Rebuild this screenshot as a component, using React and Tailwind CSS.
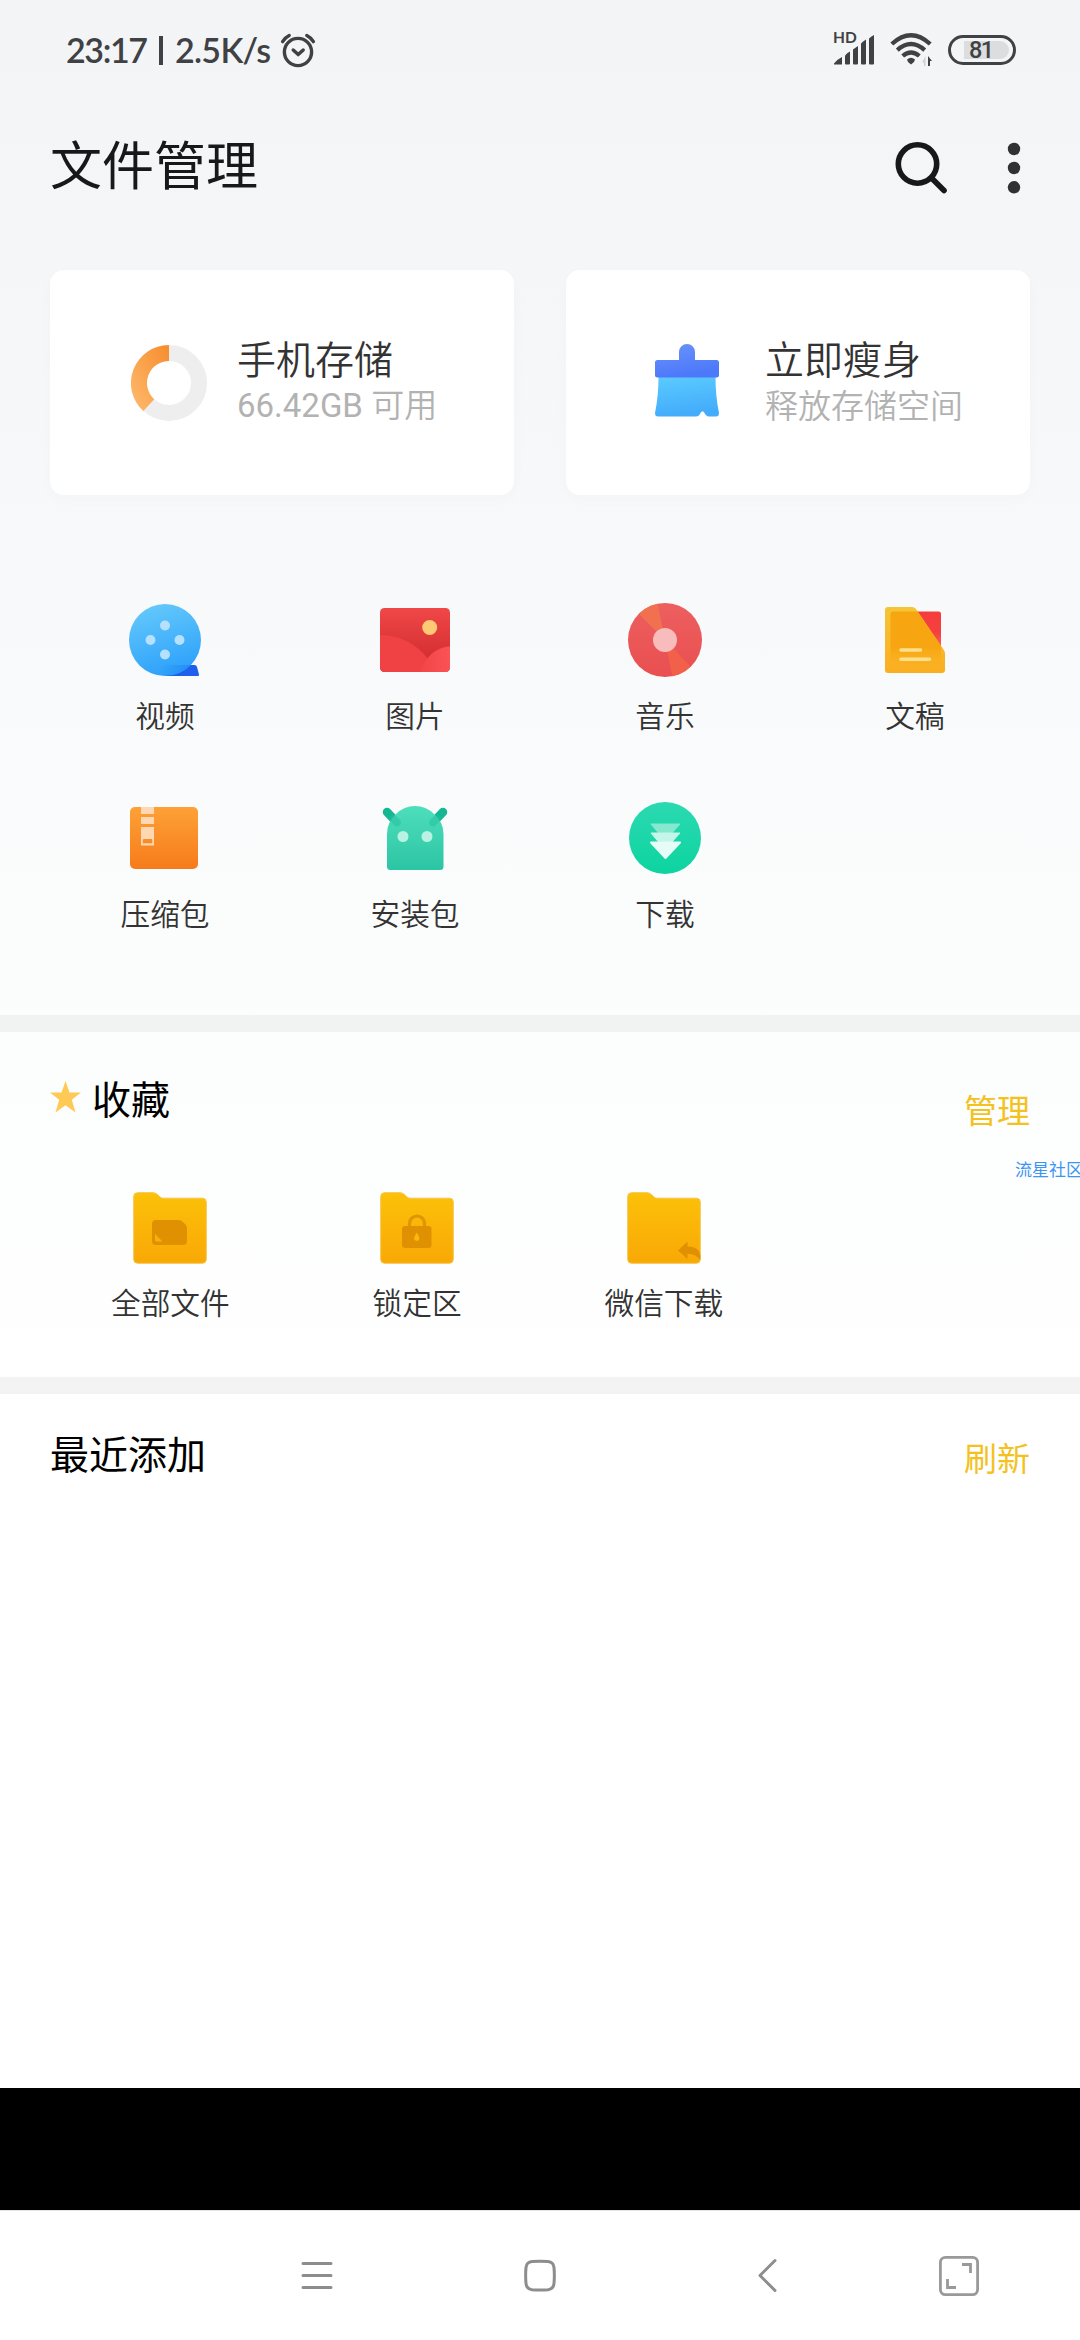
import React from "react";

const cjk = "font-['Noto_Sans_CJK_SC',sans-serif]";

function AlarmIcon() {
  return (
    <svg width="36" height="36" viewBox="0 0 36 36" fill="none" stroke="#404144" strokeWidth="3.4" strokeLinecap="round">
      <circle cx="18" cy="20" r="13.6" />
      <path d="M13.2 18l5 4.6 5-4.6" strokeLinejoin="round" />
      <path d="M2.6 9.6q2.6-4 6.6-6M33.4 9.6q-2.6-4-6.6-6" />
    </svg>
  );
}

function SignalIcon() {
  return (
    <svg width="41" height="30" viewBox="0 0 41 30" fill="#404144">
      <path d="M0 29.5V28.500Q3 24.500 8 22V29.500Z" />
      <path d="M11 28.500V20.500Q13.500 17.500 16 16.500V28.500q0 1-1 1h-3q-1 0-1-1Z" />
      <path d="M19 28.500V14.500Q21.500 12.500 24 11V28.500q0 1-1 1h-3q-1 0-1-1Z" />
      <path d="M27 28.500V8.500Q29.500 6 32 4.500V28.500q0 1-1 1h-3q-1 0-1-1Z" />
      <path d="M35 28.500V3.500Q37.500 1 40 0V28.500q0 1-1 1h-3q-1 0-1-1Z" />
    </svg>
  );
}

function WifiIcon() {
  return (
    <svg width="44" height="36" viewBox="0 0 44 36" fill="none" stroke="#404144" strokeWidth="4.300">
      <path d="M1.800 12Q21 -5.500 40.200 12" />
      <path d="M7.300 18.200Q21 6 34.700 18.200" />
      <path d="M12.700 24Q21 16.800 29.300 24" />
      <path d="M17 27.500q4-3.500 8 0l-1 2.500-3 2.500-3-2.500Z" fill="#404144" stroke="none" />
      <path d="M35.500 34V24l-3.500 6.500h2V34Z" fill="#d0d1d3" stroke="none" />
      <path d="M38 34V24l4 5h-2v5Z" fill="#404144" stroke="none" />
    </svg>
  );
}

function StorageRing() {
  return (
    <svg width="76" height="76" viewBox="0 0 76 76" fill="none" strokeWidth="16">
      <defs>
        <linearGradient id="ring" x1="0" y1="1" x2="1" y2="0">
          <stop offset="0" stopColor="#fdb465" />
          <stop offset="1" stopColor="#f78f31" />
        </linearGradient>
      </defs>
      <circle cx="38" cy="38" r="30" stroke="#eeeeee" />
      <path d="M38 8A30 30 0 0 0 17.800 60.200" stroke="url(#ring)" />
    </svg>
  );
}

function BrushIcon() {
  return (
    <svg width="64" height="74" viewBox="0 0 64 74">
      <defs>
        <linearGradient id="brushTop" x1="0" y1="0" x2="0.3" y2="1">
          <stop offset="0" stopColor="#6b93fa" />
          <stop offset="1" stopColor="#4c78fa" />
        </linearGradient>
        <linearGradient id="brushBody" x1="0" y1="0" x2="0.2" y2="1">
          <stop offset="0" stopColor="#5bcbff" />
          <stop offset="1" stopColor="#43acfb" />
        </linearGradient>
      </defs>
      <path d="M3.500 33H60.500Q60.500 52 63.900 68.500Q64.300 72.500 61 72.500H53Q50.500 72 49.500 69Q47.500 65.500 45.500 69Q44 72.500 41 72.500H3Q-.3 72.500 .1 68.500Q3.500 52 3.500 33Z" fill="url(#brushBody)" />
      <path d="M24 16V8a8 8 0 0 1 16 0V16H61.500a2.500 2.500 0 0 1 2.500 2.500V31a2.500 2.500 0 0 1-2.500 2.500H2.500A2.500 2.500 0 0 1 0 31V18.500A2.500 2.500 0 0 1 2.500 16Z" fill="url(#brushTop)" />
    </svg>
  );
}

/* Category icons share an 80x80 canvas centred on (40, 40). */
function VideoIcon() {
  return (
    <svg width="80" height="80" viewBox="0 0 80 80">
      <defs>
        <linearGradient id="video" x1="0.35" y1="0" x2="0.65" y2="1">
          <stop offset="0" stopColor="#63c8fb" />
          <stop offset="1" stopColor="#2b9ffa" />
        </linearGradient>
        <linearGradient id="tail" x1="0" y1="0" x2="1" y2="0">
          <stop offset="0" stopColor="#1c84f6" stopOpacity="0" />
          <stop offset="1" stopColor="#1c78f2" stopOpacity="0.6" />
        </linearGradient>
        <clipPath id="reel"><circle cx="40" cy="40" r="36" /></clipPath>
      </defs>
      <path d="M40 76L62 65H69.500Q71.500 65 72 67L74 74.500Q74.200 76 73 76Z" fill="#1f5fec" />
      <circle cx="40" cy="40" r="36" fill="url(#video)" />
      <path d="M36 65H68V76H36Z" fill="url(#tail)" clipPath="url(#reel)" />
      <g fill="#b5e0fe">
        <circle cx="40" cy="25.500" r="5" />
        <circle cx="25.500" cy="40" r="5" />
        <circle cx="54.500" cy="40" r="5" />
        <circle cx="40" cy="54.500" r="5" />
      </g>
    </svg>
  );
}

function PictureIcon() {
  return (
    <svg width="80" height="80" viewBox="0 0 80 80">
      <defs>
        <linearGradient id="sky" x1="0" y1="0" x2="0" y2="1">
          <stop offset="0" stopColor="#f04748" />
          <stop offset="0.75" stopColor="#d63032" />
        </linearGradient>
        <linearGradient id="hill" x1="0" y1="0" x2="1" y2="0">
          <stop offset="0" stopColor="#f24548" />
          <stop offset="0.5" stopColor="#fb5456" />
        </linearGradient>
        <clipPath id="frame"><rect x="5" y="8" width="70" height="64" rx="4.500" /></clipPath>
      </defs>
      <g clipPath="url(#frame)">
        <rect x="5" y="8" width="70" height="64" fill="url(#sky)" />
        <circle cx="5" cy="95" r="60" fill="#f04245" />
        <circle cx="78" cy="79" r="33" fill="url(#hill)" />
      </g>
      <circle cx="54.700" cy="27.500" r="7.500" fill="#fec975" />
    </svg>
  );
}

function MusicIcon() {
  return (
    <svg width="80" height="80" viewBox="0 0 80 80">
      <defs>
        <linearGradient id="disc" x1="0" y1="0" x2="0" y2="1">
          <stop offset="0" stopColor="#ed5f5f" />
          <stop offset="1" stopColor="#e94f50" />
        </linearGradient>
        <clipPath id="discClip"><circle cx="40" cy="40" r="37" /></clipPath>
      </defs>
      <circle cx="40" cy="40" r="37" fill="url(#disc)" />
      <g clipPath="url(#discClip)" fill="#f3604a">
        <path d="M40 40L10 10L32 0Z" fill="#f17050" />
        <path d="M40 40L48 80L69 70Z" />
      </g>
      <circle cx="40" cy="40" r="12" fill="#f8bcbd" />
    </svg>
  );
}

function DocIcon() {
  return (
    <svg width="80" height="80" viewBox="0 0 80 80">
      <defs>
        <linearGradient id="docBack" x1="0" y1="0" x2="0" y2="1">
          <stop offset="0" stopColor="#f5c536" />
          <stop offset="1" stopColor="#faae20" />
        </linearGradient>
        <linearGradient id="docPage" x1="0" y1="0" x2="0" y2="1">
          <stop offset="0" stopColor="#f43c3c" />
          <stop offset="0.5" stopColor="#f64040" />
          <stop offset="1" stopColor="#fb7070" />
        </linearGradient>
        <linearGradient id="docShade" x1="0" y1="0" x2="0" y2="1">
          <stop offset="0" stopColor="#f7a510" />
          <stop offset="0.6" stopColor="#f7a510" />
          <stop offset="1" stopColor="#faae20" stopOpacity="0" />
        </linearGradient>
      </defs>
      <path d="M30 11.500H63.500Q66 11.500 66 14V54H30Z" fill="url(#docPage)" />
      <path d="M13 7H37Q39.500 7 41 9L68.500 49.500Q70 51.500 70 54V70Q70 73 67 73H13Q10 73 10 70V10Q10 7 13 7Z" fill="url(#docBack)" />
      <path d="M18 11.500H42.500L66 46V70H15.500V14Q15.500 11.500 18 11.500Z" fill="url(#docShade)" />
      <path d="M26 50H45.500M26 59.200H54.500" stroke="#fee08c" strokeWidth="3.600" strokeLinecap="round" />
    </svg>
  );
}

function ZipIcon() {
  return (
    <svg width="80" height="80" viewBox="0 0 80 80">
      <defs>
        <linearGradient id="zip" x1="0" y1="0" x2="0" y2="1">
          <stop offset="0" stopColor="#fea136" />
          <stop offset="1" stopColor="#f67b1b" />
        </linearGradient>
      </defs>
      <rect x="5" y="9" width="68" height="62" rx="5" fill="url(#zip)" />
      <g fill="#fdd8b2">
        <rect x="16" y="9" width="13" height="7" />
        <rect x="16" y="19" width="13" height="7" />
        <path fillRule="evenodd" d="M16 29H29V47.500H16ZM18.800 41a1 1 0 0 0-1 1v3.200h9.500v-3.200a1 1 0 0 0-1-1Z" />
      </g>
    </svg>
  );
}

function AndroidIcon() {
  return (
    <svg width="80" height="80" viewBox="0 0 80 80">
      <defs>
        <linearGradient id="robot" x1="0" y1="0" x2="0" y2="1">
          <stop offset="0" stopColor="#4edebb" />
          <stop offset="1" stopColor="#2cc5a4" />
        </linearGradient>
      </defs>
      <path d="M12 14L22 24.500M68 14L58 24.500" stroke="#14b694" strokeWidth="8.500" strokeLinecap="round" />
      <path d="M12 36Q12 24 21 16Q29 8 40 8Q51 8 59 16Q68.500 24 68.500 36V68.500Q68.500 72 65 72H15.500Q12 72 12 68.500Z" fill="url(#robot)" />
      <path d="M18 20.500L22 24.500M62 20.500L58 24.500" stroke="#22c09d" strokeWidth="7.500" strokeLinecap="round" opacity=".5" />
      <circle cx="28" cy="38.500" r="5.500" fill="#b9f1e3" />
      <circle cx="52" cy="38.500" r="5.500" fill="#b9f1e3" />
    </svg>
  );
}

function DownloadIcon() {
  return (
    <svg width="80" height="80" viewBox="0 0 80 80">
      <defs>
        <linearGradient id="dl" x1="0" y1="0" x2="0" y2="1">
          <stop offset="0" stopColor="#2cd9b1" />
          <stop offset="1" stopColor="#0cd4a0" />
        </linearGradient>
      </defs>
      <circle cx="40" cy="40" r="36" fill="url(#dl)" />
      <path d="M26 26H55L47 35H33.500Z" fill="#86e8cf" stroke="#86e8cf" strokeLinejoin="round" />
      <path d="M26 35H55L47 44H33.500Z" fill="#c3f5e8" stroke="#c3f5e8" strokeLinejoin="round" />
      <path d="M26 44.500H55L40.500 60Z" fill="#e6fcf6" stroke="#e6fcf6" strokeWidth="2" strokeLinejoin="round" />
    </svg>
  );
}

function Folder({ id, children }) {
  return (
    <svg width="74" height="72" viewBox="0 0 74 72">
      <defs>
        <linearGradient id={id} x1="0" y1="0" x2="0" y2="1">
          <stop offset="0" stopColor="#fcc109" />
          <stop offset="1" stopColor="#f9a806" />
        </linearGradient>
      </defs>
      <path d="M4.500 .7H20Q22.500 .7 24.500 2.500L27 5Q28.300 6.200 30.500 6.200H69.500Q73.300 6.200 73.300 10V67.500Q73.300 71.300 69.500 71.300H4.500Q.7 71.300 .7 67.500V4.500Q.7 .7 4.500 .7Z" fill={`url(#${id})`} stroke="#f5c64a" strokeWidth="1" />
      {children}
    </svg>
  );
}

function AllFilesIcon() {
  return (
    <Folder id="f1">
      <path fillRule="evenodd" d="M23 28H45.500Q47.500 28 49 29.300L52.500 32.500Q54 34 54 36V49Q54 53 50 53H23Q19 53 19 49V32Q19 28 23 28ZM22 42V47.500Q22 49.500 24 49.500H29.500Z" fill="#df9102" />
    </Folder>
  );
}

function LockedIcon() {
  return (
    <Folder id="f2">
      <path d="M29.500 36V31.500a7.500 7.500 0 0 1 15 0V36" fill="none" stroke="#e09602" strokeWidth="3.200" />
      <rect x="22" y="34" width="29.500" height="22" rx="3" fill="#df9102" />
      <path d="M36.700 40.500Q42 48.500 36.700 49Q31.500 48.500 36.700 40.500Z" fill="#fbb808" />
    </Folder>
  );
}

function WechatFolderIcon() {
  return (
    <Folder id="f3">
      <path d="M51 58.500L60.500 49.500V54.500Q72.500 54.500 73.300 63V68Q68 61 60.500 62V67Z" fill="#df9102" />
    </Folder>
  );
}

const categories = [
  ["视频", VideoIcon],
  ["图片", PictureIcon],
  ["音乐", MusicIcon],
  ["文稿", DocIcon],
  ["压缩包", ZipIcon],
  ["安装包", AndroidIcon],
  ["下载", DownloadIcon],
];

const favorites = [
  ["全部文件", AllFilesIcon],
  ["锁定区", LockedIcon],
  ["微信下载", WechatFolderIcon],
];

export default function App() {
  return (
    <div className={"flex h-[2340px] w-[1080px] flex-col overflow-hidden bg-white " + cjk}>
      <div className="flex h-[2088px] flex-col bg-linear-to-b from-[#f3f4f6] via-[#fcfdfd] via-[1050px] to-white to-[1400px]">
        {/* Status bar */}
        <div className="flex h-[100px] items-center justify-between pr-16 pl-[66px] font-['Lato',sans-serif] text-[#404144]">
          <div className="flex items-center">
            <span className="w-[93px] text-[34px] leading-[40px] font-semibold tracking-[-1.4px]">23:17</span>
            <span className="h-[29px] w-1 bg-[#404144]" />
            <span className="ml-3 w-[104px] text-[34px] leading-[40px] font-semibold tracking-[-0.7px] whitespace-nowrap">2.5K/s</span>
            <span className="ml-px flex"><AlarmIcon /></span>
          </div>
          <div className="relative flex items-center">
            <span className="absolute -top-[3px] -left-px text-[15.500px] leading-[16px] font-bold">HD</span>
            <SignalIcon />
            <span className="ml-[15px] flex"><WifiIcon /></span>
            <span className="ml-[14px] flex h-[30px] w-[68px] items-center rounded-full border-[3px] border-[#404144] pl-[13px]">
              <span className="flex h-[18px] w-[45px] items-center rounded-r-[9px] bg-[#dcddde] pl-[5px] font-['Roboto',sans-serif] text-[23.500px] leading-[18px] font-medium tracking-[-1.500px]">81</span>
            </span>
          </div>
        </div>

        {/* Title bar */}
        <div className="flex h-[170px] justify-between pt-[31px] pr-[59px] pl-[50px]">
          <h1 className="text-[52px] leading-[64px] text-[#17181a]">文件管理</h1>
          <div className="flex gap-[60px] pt-[9px]">
            <svg width="54" height="56" viewBox="0 0 54 56" fill="none" stroke="#17181a" strokeLinecap="round">
              <circle cx="24.500" cy="24" r="19.200" strokeWidth="5.600" />
              <path d="M39.500 39L51 50.500" strokeWidth="5.600" />
            </svg>
            <svg width="14" height="56" viewBox="0 0 14 56" fill="#303133">
              <circle cx="7" cy="9" r="6.200" />
              <circle cx="7" cy="28" r="6.200" />
              <circle cx="7" cy="47.300" r="6.200" />
            </svg>
          </div>
        </div>

        {/* Storage cards */}
        <div className="grid grid-cols-2 gap-[52px] px-[50px]">
          <div className="flex h-[225px] items-center rounded-[14px] bg-white pl-[81px] shadow-[0_4px_14px_rgba(60,90,160,0.025)]">
            <StorageRing />
            <div className="ml-[30px] flex flex-col pb-1 font-[350]">
              <span className="text-[39px] leading-[48px] text-[#333333]">手机存储</span>
              <span className="mt-0.5 font-['Roboto','Noto_Sans_CJK_SC',sans-serif] text-[33px] leading-[46px] font-normal text-[#b2b2b2]">
                66.42GB <span className="font-[350]">可用</span>
              </span>
            </div>
          </div>
          <div className="flex h-[225px] items-center rounded-[14px] bg-white pl-[89px] shadow-[0_4px_14px_rgba(60,90,160,0.025)]">
            <span className="-mt-1 flex"><BrushIcon /></span>
            <div className="ml-[46px] flex flex-col pb-1 font-[350]">
              <span className="text-[39px] leading-[48px] text-[#333333]">立即瘦身</span>
              <span className="mb-0.5 text-[33px] leading-[46px] text-[#b2b2b2]">释放存储空间</span>
            </div>
          </div>
        </div>

        {/* Categories */}
        <div className="grid h-[520px] grid-cols-4 content-start gap-y-[62px] px-10 pt-[105px]">
          {categories.map(([label, Icon]) => (
            <div key={label} className="flex h-[136px] flex-col items-center">
              <Icon />
              <span className="mt-[15px] text-[29.700px] leading-[40px] font-[350] text-[#333333]">{label}</span>
            </div>
          ))}
        </div>

        <div className="h-[17px] bg-[#f1f3f2]" />

        {/* Favorites */}
        <div className="relative h-[345px]">
          <div className="flex h-[129px] justify-between px-[50px] pt-[40px]">
            <div className="flex h-[50px] items-center">
              <svg width="32" height="32" viewBox="0 0 32 32" fill="#fec955">
                <path d="M15.500 0L19.500 11.500H31L21.800 18.800L25.500 31.500L15.500 24.300L5.500 31.500L9.200 18.800L0 11.500H11.500Z" />
              </svg>
              <span className="ml-[10px] text-[39px] leading-[50px] text-black">收藏</span>
            </div>
            <span className="mt-[14px] text-[33px] leading-[46px] text-[#f3c21f]">管理</span>
          </div>
          <div className="ml-[47px] grid w-[987px] grid-cols-4 pt-[31px]">
            {favorites.map(([label, Icon]) => (
              <div key={label} className="flex flex-col items-center">
                <Icon />
                <span className="mt-[18px] text-[29.700px] leading-[40px] font-[350] text-[#333333]">{label}</span>
              </div>
            ))}
          </div>
          <span className="absolute top-[126px] left-[1015px] text-[17px] leading-[22px] whitespace-nowrap text-[#3c95f5]">流星社区</span>
        </div>

        <div className="h-[17px] bg-[#f3f3f3]" />

        {/* Recently added */}
        <div className="flex justify-between px-[50px] pt-[33px]">
          <span className="text-[39px] leading-[50px] text-black">最近添加</span>
          <span className="mt-[7px] text-[33px] leading-[46px] text-[#f3c21f]">刷新</span>
        </div>
      </div>

      <div className="h-[122px] bg-black" />

      {/* Navigation bar */}
      <div className="flex h-[130px] items-center border-t border-[#e4e4e4] bg-white pl-[301px]">
        <svg width="32" height="40" viewBox="0 0 32 40" stroke="#8d8d8d" strokeWidth="3" strokeLinecap="round">
          <path d="M2 7.500H30M2 19.500H30M2 31.500H30" />
        </svg>
        <svg className="ml-[189px]" width="36" height="40" viewBox="0 0 36 40" fill="none" stroke="#8d8d8d" strokeWidth="3">
          <path d="M10 5.500Q18 4.800 26 5.500Q31.500 6 32 11.500Q32.700 19.500 32 27.500Q31.500 33 26 33.700Q18 34.500 10 33.700Q4.500 33 4 27.500Q3.300 19.500 4 11.500Q4.500 6 10 5.500Z" />
        </svg>
        <svg className="ml-[198px]" width="22" height="40" viewBox="0 0 22 40" fill="none" stroke="#8d8d8d" strokeWidth="3" strokeLinecap="round" strokeLinejoin="round">
          <path d="M19 4.500L4 19.500L19 34.500" />
        </svg>
        <svg className="ml-[161px]" width="40" height="40" viewBox="0 0 40 40" fill="none" stroke="#999999" strokeWidth="2.800">
          <rect x="1.400" y="1.400" width="37.200" height="37.200" rx="5" />
          <path d="M23 8.500H31.500V17M8.500 23V31.500H17" />
        </svg>
      </div>
    </div>
  );
}
